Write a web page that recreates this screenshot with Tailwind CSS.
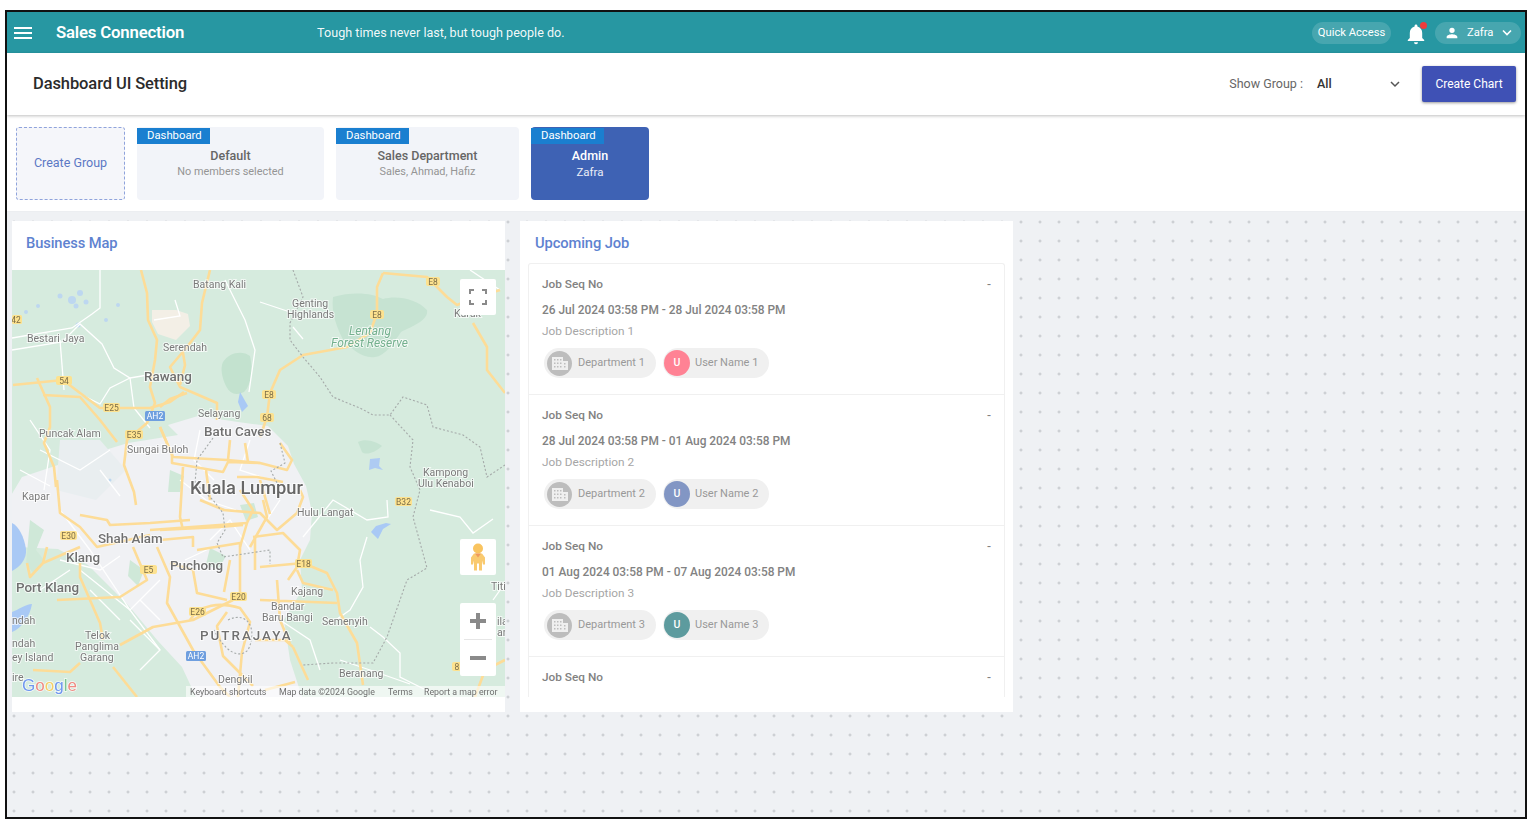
<!DOCTYPE html>
<html lang="en">
<head>
<meta charset="UTF-8">
<title>Dashboard UI Setting</title>
<script src="https://cdn.jsdelivr.net/npm/@tailwindcss/browser@4"></script>
</head>
<body class="bg-white font-['Roboto',sans-serif] overflow-hidden">
<div class="w-[1537px] h-[825px] pl-[5px] pt-[10px]">
  <div class="w-[1522px] h-[809px] border-2 border-[#111] flex flex-col overflow-hidden">

    <!-- top bar -->
    <header class="h-[41px] shrink-0 bg-[#2797a2] flex items-center text-white">
      <svg class="ml-[7px] w-[18px] h-[14px]" viewBox="0 0 18 14" fill="#fff"><rect y="1" width="18" height="2"/><rect y="6" width="18" height="2"/><rect y="11" width="18" height="2"/></svg>
      <span class="ml-[24px] text-[16.8px] font-semibold tracking-[-0.2px]">Sales Connection</span>
      <span class="ml-[133px] pt-[1px] text-[12.6px] text-white/95">Tough times never last, but tough people do.</span>
      <div class="ml-auto flex items-center">
        <span class="h-[22px] w-[79px] pt-[1px] rounded-full bg-white/15 text-[11.2px] flex items-center justify-center">Quick Access</span>
        <span class="relative ml-[15px] w-[20px] h-[22px] mt-[3px]">
          <svg class="w-[20px] h-[22px]" viewBox="0 0 20 22" fill="#fff"><path d="M10 1.500c-.8 0-1.400.6-1.400 1.400v.7C5.400 4.400 3.800 7 3.800 10v5l-2 2v1h16.400v-1l-2-2v-5c0-3-1.600-5.600-4.800-6.400v-.7c0-.8-.6-1.400-1.400-1.400z"/><path d="M8 19.200h4a2 2 0 0 1-4 0z"/></svg>
          <span class="absolute right-[-1px] top-[-1px] w-[7px] h-[7px] rounded-full bg-[#ef3b3b]"></span>
        </span>
        <span class="ml-[9px] mr-[4px] h-[22px] w-[86px] rounded-full bg-white/15 text-[11.200px] flex items-center">
          <svg class="ml-[9px] w-[16px] h-[16px]" viewBox="0 0 24 24" fill="#fff"><path d="M12 12a4 4 0 1 0 0-8 4 4 0 0 0 0 8zm0 2c-2.700 0-8 1.300-8 4v2h16v-2c0-2.700-5.300-4-8-4z"/></svg>
          <span class="ml-[7px] pt-[1px]">Zafra</span>
          <svg class="ml-[9px] w-[10px] h-[7px]" viewBox="0 0 10 7" fill="none" stroke="#fff" stroke-width="1.600"><path d="M1 1.500l4 4 4-4"/></svg>
        </span>
      </div>
    </header>

    <!-- page title bar -->
    <div class="h-[62px] shrink-0 bg-white flex items-center shadow-[0_1px_3px_rgba(0,0,0,0.25)] relative z-10">
      <h1 class="ml-[26px] text-[16.500px] font-medium text-[#2b2b2b] tracking-[-0.1px]">Dashboard UI Setting</h1>
      <div class="ml-auto flex items-center">
        <span class="text-[12.500px] text-[#666]">Show Group :</span>
        <span class="ml-[14px] w-[73px] text-[12.500px] font-medium text-[#333]">All</span>
        <svg class="w-[10px] h-[7px] mr-[1px]" viewBox="0 0 10 7" fill="none" stroke="#555" stroke-width="1.500"><path d="M1 1l4 4 4-4"/></svg>
        <button class="ml-[21px] mr-[9px] w-[94px] h-[36px] rounded-[2px] bg-[#3f51b5] text-white text-[12px] shadow-[0_1px_3px_rgba(0,0,0,0.4)]">Create Chart</button>
      </div>
    </div>

    <!-- groups -->
    <div class="h-[97px] shrink-0 bg-white border-b border-[#eceef1] pl-[9px] pt-[12px] flex items-start">
      <div class="w-[109px] h-[73px] rounded-[3px] border border-dashed border-[#8fa3dc] bg-[#f5f6fa] flex items-center justify-center text-[12.500px] text-[#5b78c4]">Create Group</div>
      <div class="ml-[12px] w-[187px] h-[73px] rounded-[4px] bg-[#f2f4f9] pt-[1px]">
        <div class="w-[73px] h-[16px] bg-[#1a7fd0] text-white text-[11.300px] leading-[16px] pl-[10px]">Dashboard</div>
        <div class="text-center text-[12.500px] font-medium text-[#666] mt-[4px] leading-[16px]">Default</div>
        <div class="text-center text-[10.900px] text-[#959595] leading-[16px]">No members selected</div>
      </div>
      <div class="ml-[12px] w-[183px] h-[73px] rounded-[4px] bg-[#f2f4f9] pt-[1px]">
        <div class="w-[73px] h-[16px] bg-[#1a7fd0] text-white text-[11.300px] leading-[16px] pl-[10px]">Dashboard</div>
        <div class="text-center text-[12.500px] font-medium text-[#666] mt-[4px] leading-[16px]">Sales Department</div>
        <div class="text-center text-[10.900px] text-[#959595] leading-[16px]">Sales, Ahmad, Hafiz</div>
      </div>
      <div class="ml-[12px] w-[118px] h-[73px] rounded-[4px] bg-[#3e62b4] pt-[1px]">
        <div class="w-[73px] h-[16px] bg-[#1a7fd0] text-white text-[11.300px] leading-[16px] pl-[10px]">Dashboard</div>
        <div class="text-center text-[12.500px] font-medium text-white mt-[4px] leading-[16px]">Admin</div>
        <div class="text-center text-[11.500px] text-white/90 leading-[16px]">Zafra</div>
      </div>
    </div>

    <!-- dotted board -->
    <div class="flex-1 bg-[#eff1f4] bg-[radial-gradient(circle,#c2c5c9_1px,transparent_1.300px)] bg-[size:19px_19px] bg-[position:-2.500px_0.500px] pl-[5px] pt-[9px] flex items-start gap-[15px]">

      <!-- map card -->
      <section class="w-[493px] h-[491px] bg-white">
        <h2 class="h-[49px] pl-[14px] pb-[5px] flex items-center text-[14.700px] font-medium text-[#5e82d0] tracking-[-0.1px]">Business Map</h2>
        <div class="relative w-[493px] h-[427px] overflow-hidden bg-[#d6ebde]">
          <svg class="block blur-[0.4px]" width="493" height="427" viewBox="12 270 493 427" font-family="Roboto, sans-serif">
            <!-- land shades -->
            <path d="M333 297c20-6 40-4 50 2 14-4 34 0 44 11 2 10-14 16-26 22-8 12-16 24-26 25-12 2-22-8-30-14-8-14-14-30-12-46z" fill="#c6e3d2"/>
            <path d="M223 362c6-10 20-12 27-6 3 12 2 28-6 36-8 4-14 2-18-6-4-8-6-18-3-24z" fill="#c3e2cf"/>
            <path d="M358 442c8-4 18 0 24 4-6 6-16 10-20 6z" fill="#c6e3d2"/>
            <path d="M168 425l30-9 40 6 30 4 20 20 6 18 12 22 6 26-2 28-10 20 2 30-18 30 6 40 12 37H196l-14-30-24-26-30-36-40-40-30-16-40-2-26-20 30-50 60-20 46-14 50-8z" fill="#f0f1f4"/>
            <path d="M60 440l40 0 26 30-30 30-40-10z" fill="#e9eef0"/>
            <path d="M30 520l14 10-8 20 8 10-10 14-8-10zM130 560l14 10-6 16-10-10z" fill="#cfe8d8"/>
            <path d="M170 470l14 6-4 16-12 0zM240 505l14-2 4 14-12 4zM210 548l16 8-8 14-12-6z" fill="#cfe8d8"/>
            <path d="M12 523c7 3 12 14 14 26 1 10-6 18-14 22z" fill="#a9c9f5"/>
            <path d="M12 612c6-2 14-8 20-8-2 12-10 24-20 28z" fill="#a9c9f5"/>
            <g fill="#bdd7f0">
              <circle cx="60" cy="296" r="2.500"/><circle cx="72" cy="300" r="4"/><circle cx="80" cy="293" r="3"/><circle cx="86" cy="302" r="2.500"/><circle cx="76" cy="306" r="2.500"/><circle cx="38" cy="306" r="2"/><circle cx="26" cy="312" r="2"/><circle cx="118" cy="305" r="2"/><circle cx="106" cy="320" r="2"/><circle cx="78" cy="325" r="2.500"/><circle cx="110" cy="480" r="1.500"/>
            </g>
            <path d="M370 459l10-1-1 8 4 4-8-2-6 2z" fill="#aecbf3"/>
            <path d="M376 526l10-3 5 1-8 5-5 10-7-7z" fill="#a9c9f5"/>
            <path d="M152 310h24l12 4 2 12-14 14-18-6-6-12z" fill="#f3efe6"/>
            <path d="M240 392l8 14-6 6-4-10z" fill="#a9c9f5"/>
            <!-- minor white roads -->
            <g fill="none" stroke="#fff" stroke-width="1.300">
              <path d="M100 270v38l-8 6-20 14-60 10"/><path d="M12 350l50-8 18-18 22 20 12 24 16 10 24-4"/><path d="M60 340l4 50"/>
              <path d="M130 378l-20 10-10 16-20-10"/><path d="M130 378l4 30 16 20"/><path d="M175 300l5 16-26 4"/>
              <path d="M225 280l20 40 10 30 -6 42"/><path d="M30 420l20 30-6 40"/><path d="M260 302l33 11M293 327l10 12"/>
              <path d="M430 510l30 7 13 16 20-14M387 500l1 17-21 3-34-20-30 37"/><path d="M367 537l-7 23 3 27-13 23-20 14"/>
              <path d="M370 627l13 10 17 16v24l20 10 20 10"/><path d="M493 600l12-17"/><path d="M470 270l30 20"/>
              <path d="M60 510l30 40 40 60 30-30"/><path d="M80 570l50 40 30 40"/><path d="M130 620l30 30-20 20"/><path d="M40 450l40 20 30-20"/>
              <path d="M20 470l30 16M100 470l20 26M60 560l40 10 20-14M40 590l30-20M90 590l30 30M140 600l20 20"/>
              <path d="M180 480l26 20 30 10M200 430l-6 30 20 20M250 440l-10 30 30 10M210 540l20-20 20 30M280 500l-20 30M185 560l30-14"/>
              <path d="M340 660l30 10 40 14"/><path d="M280 620l30 20 10 30"/>
            </g>
            <!-- main yellow roads -->
            <g fill="none" stroke="#fddc97" stroke-width="2.600" stroke-linejoin="round">
              <path d="M141 270l6 23 1 27 9 20-2 20-5 27 5 16-8 20-20 17-3 25 10 27 2 13"/>
              <path d="M210 270l-8 33-2 27-13 17-17 20 10 20 37 16v17"/>
              <path d="M183 353l2 12-5 20"/><path d="M160 407l10-8 17-6"/><path d="M160 427l13 30 54 3 33 3"/>
              <path d="M13 385l50-5 17 13 20 15 50 0 20-6 14-10"/>
              <path d="M37 378l13 29v20l-6 16 10 24 2 20"/><path d="M43 395l37 2 20 23 17 22"/>
              <path d="M57 480l3 33 20 14 17 20 53-12M80 515l27 5 3 5 40-2 40-3"/>
              <path d="M47 547l-4 16-13 14-3-14M43 563l37-16"/>
              <path d="M80 563v14l20 46 3 17"/>
              <path d="M57 600l63-3 27-17-14-33"/>
              <path d="M157 547l13 30-3 26 26 47 27 37 10 10"/>
              <path d="M120 645l33-18 40-7 40-20"/>
              <path d="M80 663l-10 9-37-2"/><path d="M113 667l24 30"/>
              <path d="M170 563l23 7 4 23 30 7M197 550l43-7v50M150 530l97-7"/>
              <!-- city -->
              <path d="M172 453v10l51 9 5-10 32 1 27 7 5-10-12-17"/>
              <path d="M183 467l-3 50 3 13M160 530l60-3 23-2M160 540l33-3v10"/>
              <path d="M250 547l17-30-4-17M240 547l7-24 6-13-13-20"/>
              <path d="M223 510l37 3 17 17 20-17 6-16-3-7"/>
              <path d="M253 537l30-4 17 17-3 17-9 13M255 537v33"/>
              <path d="M237 477h20l26 5"/><path d="M245 443l3 19M230 440l-2 20"/>
              <path d="M160 427l10 23"/><path d="M200 500l24 10M260 480l10 34M206 470l4 30"/>
              <path d="M297 570l6 13 30 7M260 567l43-4 24 10 10 20 3 20 17 30 6 42"/>
              <path d="M260 600l77 3M293 647l15 33M277 580l3 40 10 24"/>
              <path d="M190 620c10-16 30-18 50-12l10 14-8 30 -4 45"/><path d="M227 612l-10 14 6 30 30 30"/>
              <path d="M255 640l30 0 8 7M265 690l30-8"/><path d="M230 560l-6 32"/>
              <!-- north east -->
              <path d="M383 273l-6 14v26l-7 20-23 14-44 8-23 15-10 23-3 24-7 20"/>
              <path d="M383 273l44 4 20 20 10 8 20-8 23-7"/>
              <path d="M473 323l14 24v23l18 23"/>
              <path d="M505 660l-20 10-10 27"/>
            </g>
            <!-- boundary -->
            <g fill="none" stroke="#a5aaa9" stroke-width="1.100" stroke-dasharray="2 2">
              <path d="M293 270l10 27-13 26v17l13 17 17 20 13 20 27 11 13 7h17l13-18 24 8 6 22 30 8 17 12 7 30 18-12"/>
              <path d="M390 415l23 25-3 27 7 16 3 7-7 27 14 51-20 12-20 57-14 26-40 0-30 2"/>
              <path d="M213 438l-16 22-2 23 18 17 10 13 2 17-8 13 6 14 27-4 20-3v14"/>
              <path d="M280 443l5 20-14 8 8 16"/>
              <path d="M228 620c20-10 30 10 20 30-10 10-24 0-34-20"/>
            </g>
            <!-- shields -->
            <g font-size="8.500" fill="#7b6d48" text-anchor="middle">
              <rect x="12" y="315" width="10" height="9" rx="1.500" fill="#fde28f"/><text x="16" y="322.500">42</text>
              <rect x="56" y="376" width="16" height="9" rx="2" fill="#fde28f"/><text x="64" y="383.500">54</text>
              <rect x="103" y="403" width="17" height="9" rx="2" fill="#fde28f"/><text x="111.500" y="410.500">E25</text>
              <rect x="125" y="430" width="18" height="9" rx="2" fill="#fde28f"/><text x="134" y="437.500">E35</text>
              <rect x="145" y="411" width="20" height="10" rx="1.500" fill="#6f9fdf"/><text x="155" y="419" fill="#fff">AH2</text>
              <rect x="60" y="531" width="17" height="9" rx="2" fill="#fde28f"/><text x="68.500" y="538.500">E30</text>
              <rect x="140" y="565" width="17" height="9" rx="2" fill="#fde28f"/><text x="148.500" y="572.500">E5</text>
              <rect x="230" y="592" width="17" height="9" rx="2" fill="#fde28f"/><text x="238.500" y="599.500">E20</text>
              <rect x="189" y="607" width="17" height="9" rx="2" fill="#fde28f"/><text x="197.500" y="614.500">E26</text>
              <rect x="186" y="651" width="20" height="10" rx="1.500" fill="#6f9fdf"/><text x="196" y="659" fill="#fff">AH2</text>
              <rect x="295" y="559" width="17" height="9" rx="2" fill="#fde28f"/><text x="303.500" y="566.500">E18</text>
              <rect x="395" y="497" width="17" height="9" rx="2" fill="#fde28f"/><text x="403.500" y="504.500">B32</text>
              <rect x="262" y="390" width="14" height="9" rx="2" fill="#fde28f"/><text x="269" y="397.500">E8</text>
              <rect x="260" y="413" width="14" height="9" rx="2" fill="#fde28f"/><text x="267" y="420.500">68</text>
              <rect x="370" y="310" width="14" height="9" rx="2" fill="#fde28f"/><text x="377" y="317.500">E8</text>
              <rect x="426" y="277" width="14" height="9" rx="2" fill="#fde28f"/><text x="433" y="284.500">E8</text>
              <rect x="452" y="662" width="10" height="9" rx="2" fill="#fde28f"/><text x="457" y="669.500">8</text>
            </g>
            <!-- place labels -->
            <g fill="#7a7a7a" stroke="#fff" stroke-width="2" stroke-opacity="0.700" paint-order="stroke" font-size="10.500">
              <text x="193" y="288">Batang Kali</text><text x="292" y="307">Genting</text><text x="287" y="318">Highlands</text>
              <text x="27" y="342">Bestari Jaya</text><text x="163" y="351">Serendah</text>
              <text x="198" y="417">Selayang</text><text x="39" y="437">Puncak Alam</text><text x="127" y="453">Sungai Buloh</text>
              <text x="423" y="476">Kampong</text><text x="418" y="487">Ulu Kenaboi</text><text x="22" y="500">Kapar</text>
              <text x="297" y="516">Hulu Langat</text>
              <text x="291" y="595">Kajang</text><text x="271" y="610">Bandar</text><text x="262" y="621">Baru Bangi</text>
              <text x="322" y="625">Semenyih</text><text x="85" y="639">Telok</text><text x="75" y="650">Panglima</text><text x="80" y="661">Garang</text>
              <text x="12" y="624">ndah</text><text x="12" y="647">ndah</text><text x="12" y="661">ey Island</text><text x="12" y="681">ire</text>
              <text x="218" y="683">Dengkil</text><text x="339" y="677">Beranang</text><text x="491" y="590">Titi</text>
              <text x="454" y="317">Kuruk</text><text x="497" y="625">ila</text><text x="497" y="636">ar</text>
            </g>
            <g fill="#707070" stroke="#fff" stroke-width="2" stroke-opacity="0.700" paint-order="stroke" font-size="13.400" font-weight="500">
              <text x="144" y="381">Rawang</text><text x="204" y="436">Batu Caves</text><text x="98" y="543">Shah Alam</text>
              <text x="66" y="562">Klang</text><text x="170" y="570">Puchong</text><text x="16" y="592">Port Klang</text>
              <text x="200" y="640" letter-spacing="2">PUTRAJAYA</text>
            </g>
            <text x="190" y="494" font-size="18.300" font-weight="500" fill="#666" stroke="#fff" stroke-width="2" stroke-opacity="0.700" paint-order="stroke">Kuala Lumpur</text>
            <g fill="#74b08e" stroke="#fff" stroke-width="2" stroke-opacity="0.700" paint-order="stroke" font-size="12" font-style="italic">
              <text x="349" y="335">Lentang</text><text x="331" y="347">Forest Reserve</text>
            </g>
            <!-- google wordmark -->
            <g font-size="17" font-family="Liberation Sans, sans-serif" stroke="#fff" stroke-width="1.500" paint-order="stroke" stroke-opacity="0.800">
              <text x="22" y="691" fill="#6f97ee">G<tspan fill="#ef8b83">o</tspan><tspan fill="#f4cf66">o</tspan><tspan fill="#6f97ee">g</tspan><tspan fill="#7cc592">l</tspan><tspan fill="#ef8b83">e</tspan></text>
            </g>
            <!-- attribution -->
            <rect x="186" y="686" width="319" height="11" fill="#fff" fill-opacity="0.600"/>
            <g font-size="8.800" fill="#6f6f6f">
              <text x="190" y="695">Keyboard shortcuts</text><text x="279" y="695">Map data ©2024 Google</text><text x="388" y="695">Terms</text><text x="424" y="695">Report a map error</text>
            </g>
          </svg>
          <!-- map controls -->
          <div class="absolute left-[448px] top-[9px] w-[36px] h-[36px] bg-white rounded-[2px] flex items-center justify-center">
            <svg class="w-[18px] h-[16px]" viewBox="0 0 18 16" fill="none" stroke="#8a8a8a" stroke-width="2"><path d="M1 5V1h4M13 1h4v4M17 11v4h-4M5 15H1v-4"/></svg>
          </div>
          <div class="absolute left-[448px] top-[269px] w-[36px] h-[36px] bg-white rounded-[2px] flex items-center justify-center">
            <svg class="w-[16px] h-[28px]" viewBox="0 0 16 28"><circle cx="8" cy="5.500" r="5" fill="#f9c460"/><path d="M4 10.500h8l3 4 0 7-2 0-1-4v10H9v-7H7v7H4v-10l-1 4-2 0 0-7z" fill="#f9ca70"/><path d="M5 10.500l3 4 3-4z" fill="#ef9a5c"/></svg>
          </div>
          <div class="absolute left-[448px] top-[333px] w-[36px] h-[73px] bg-white rounded-[2px] flex flex-col items-center">
            <div class="h-[36px] flex items-center justify-center">
              <svg class="w-[16px] h-[16px]" viewBox="0 0 16 16" fill="#8a8a8a"><rect y="6" width="16" height="4"/><rect x="6" width="4" height="16"/></svg>
            </div>
            <div class="w-[28px] h-px bg-[#e6e6e6]"></div>
            <div class="h-[36px] flex items-center justify-center">
              <svg class="w-[16px] h-[4px]" viewBox="0 0 16 4" fill="#8a8a8a"><rect width="16" height="4"/></svg>
            </div>
          </div>
        </div>
      </section>

      <!-- job card -->
      <section class="w-[493px] h-[491px] bg-white">
        <h2 class="h-[42px] pl-[15px] pt-[2px] flex items-center text-[14.700px] font-medium text-[#5e82d0] tracking-[-0.1px]">Upcoming Job</h2>
        <div class="ml-[8px] w-[477px] h-[434px] overflow-hidden border-t border-x border-[#f0f0f0] rounded-t-[3px]">

          <div class="h-[131px] border-b border-[#f0f0f0] px-[13px] pt-[10px]">
            <div class="flex justify-between text-[11.800px] leading-[20px] font-medium text-[#828282]"><span>Job Seq No</span><span>-</span></div>
            <div class="mt-[6px] text-[11.900px] leading-[20px] font-medium text-[#828282]">26 Jul 2024 03:58 PM - 28 Jul 2024 03:58 PM</div>
            <div class="mt-[1px] text-[11.800px] leading-[20px] text-[#a6a6a6]">Job Description 1</div>
            <div class="mt-[7px] ml-[2px] flex gap-[7px]">
              <div class="pl-[3px] w-[112px] h-[30px] rounded-full bg-[#f0f0f0] flex items-center text-[11px] text-[#999]">
                <span class="w-[25px] h-[25px] rounded-full bg-[#bdbdbd] flex items-center justify-center"><svg class="w-[18px] h-[15px]" viewBox="0 0 18 15" fill="#efefef"><path d="M1 1h11v4h5v9H1zM3 3v1.500h1.500V3zm3 0v1.500h1.500V3zm3 0v1.500h1.500V3zM3 6.500V8h1.500V6.500zm3 0V8h1.500V6.500zm3 0V8h1.500V6.500zM13 7v1.500h1.500V7zM3 10v1.500h1.500V10zm3 0v1.500h1.500V10zm3 0v1.500h1.500V10zm4 0v1.500h1.500V10z" fill-rule="evenodd"/></svg></span>
                <span class="ml-[6px]">Department 1</span>
              </div>
              <div class="pl-[1px] w-[106px] h-[30px] rounded-full bg-[#f0f0f0] flex items-center text-[11px] text-[#999]">
                <span class="w-[26px] h-[26px] rounded-full bg-[#ff8294] text-white text-[10.500px] font-medium flex items-center justify-center">U</span>
                <span class="ml-[5px]">User Name 1</span>
              </div>
            </div>
          </div>

          <div class="h-[131px] border-b border-[#f0f0f0] px-[13px] pt-[10px]">
            <div class="flex justify-between text-[11.800px] leading-[20px] font-medium text-[#828282]"><span>Job Seq No</span><span>-</span></div>
            <div class="mt-[6px] text-[11.900px] leading-[20px] font-medium text-[#828282]">28 Jul 2024 03:58 PM - 01 Aug 2024 03:58 PM</div>
            <div class="mt-[1px] text-[11.800px] leading-[20px] text-[#a6a6a6]">Job Description 2</div>
            <div class="mt-[7px] ml-[2px] flex gap-[7px]">
              <div class="pl-[3px] w-[112px] h-[30px] rounded-full bg-[#f0f0f0] flex items-center text-[11px] text-[#999]">
                <span class="w-[25px] h-[25px] rounded-full bg-[#bdbdbd] flex items-center justify-center"><svg class="w-[18px] h-[15px]" viewBox="0 0 18 15" fill="#efefef"><path d="M1 1h11v4h5v9H1zM3 3v1.500h1.500V3zm3 0v1.500h1.500V3zm3 0v1.500h1.500V3zM3 6.500V8h1.500V6.500zm3 0V8h1.500V6.500zm3 0V8h1.500V6.500zM13 7v1.500h1.500V7zM3 10v1.500h1.500V10zm3 0v1.500h1.500V10zm3 0v1.500h1.500V10zm4 0v1.500h1.500V10z" fill-rule="evenodd"/></svg></span>
                <span class="ml-[6px]">Department 2</span>
              </div>
              <div class="pl-[1px] w-[106px] h-[30px] rounded-full bg-[#f0f0f0] flex items-center text-[11px] text-[#999]">
                <span class="w-[26px] h-[26px] rounded-full bg-[#8296c4] text-white text-[10.500px] font-medium flex items-center justify-center">U</span>
                <span class="ml-[5px]">User Name 2</span>
              </div>
            </div>
          </div>

          <div class="h-[131px] border-b border-[#f0f0f0] px-[13px] pt-[10px]">
            <div class="flex justify-between text-[11.800px] leading-[20px] font-medium text-[#828282]"><span>Job Seq No</span><span>-</span></div>
            <div class="mt-[6px] text-[11.900px] leading-[20px] font-medium text-[#828282]">01 Aug 2024 03:58 PM - 07 Aug 2024 03:58 PM</div>
            <div class="mt-[1px] text-[11.800px] leading-[20px] text-[#a6a6a6]">Job Description 3</div>
            <div class="mt-[7px] ml-[2px] flex gap-[7px]">
              <div class="pl-[3px] w-[112px] h-[30px] rounded-full bg-[#f0f0f0] flex items-center text-[11px] text-[#999]">
                <span class="w-[25px] h-[25px] rounded-full bg-[#bdbdbd] flex items-center justify-center"><svg class="w-[18px] h-[15px]" viewBox="0 0 18 15" fill="#efefef"><path d="M1 1h11v4h5v9H1zM3 3v1.500h1.500V3zm3 0v1.500h1.500V3zm3 0v1.500h1.500V3zM3 6.500V8h1.500V6.500zm3 0V8h1.500V6.500zm3 0V8h1.500V6.500zM13 7v1.500h1.500V7zM3 10v1.500h1.500V10zm3 0v1.500h1.500V10zm3 0v1.500h1.500V10zm4 0v1.500h1.500V10z" fill-rule="evenodd"/></svg></span>
                <span class="ml-[6px]">Department 3</span>
              </div>
              <div class="pl-[1px] w-[106px] h-[30px] rounded-full bg-[#f0f0f0] flex items-center text-[11px] text-[#999]">
                <span class="w-[26px] h-[26px] rounded-full bg-[#5d9b9e] text-white text-[10.500px] font-medium flex items-center justify-center">U</span>
                <span class="ml-[5px]">User Name 3</span>
              </div>
            </div>
          </div>

          <div class="px-[13px] pt-[10px]">
            <div class="flex justify-between text-[11.800px] leading-[20px] font-medium text-[#828282]"><span>Job Seq No</span><span>-</span></div>
          </div>
        </div>
      </section>
    </div>
  </div>
</div>
</body>
</html>
